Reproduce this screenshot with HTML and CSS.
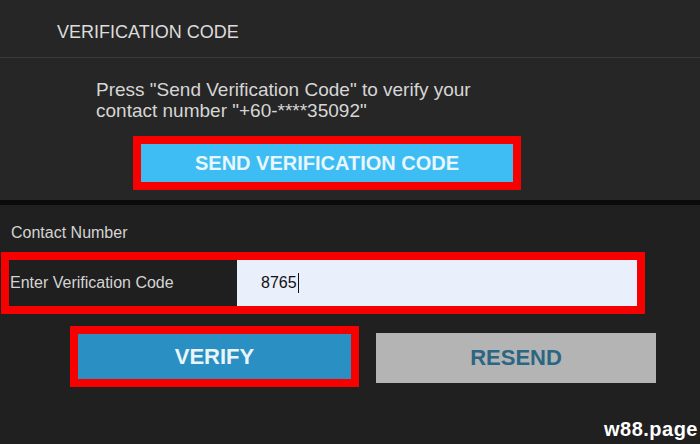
FILE: index.html
```html
<!DOCTYPE html>
<html lang="en">
<head>
  <meta charset="UTF-8" />
  <meta name="viewport" content="width=device-width, initial-scale=1.0"/>
  <title>Verification Code</title>
  <link rel="stylesheet" href="styles.css">
</head>
<body>

  <!-- Send code panel -->
  <div class="send-panel">
    <div class="panel-title">VERIFICATION CODE</div>
    <p class="send-info">Press "Send Verification Code" to verify your contact number "+60-****35092"</p>
    <div class="highlight send-box">
      <button class="btn-send">SEND VERIFICATION CODE</button>
    </div>
  </div>

  <!-- Verify form -->
  <div class="verify-panel">
    <div class="field-label">Contact Number</div>

    <div class="highlight code-row">
      <div class="code-label">Enter Verification Code</div>
      <div class="code-field">8765<span class="caret"></span></div>
    </div>

    <div class="actions">
      <div class="highlight verify-box">
        <button class="btn-verify">VERIFY</button>
      </div>
      <button class="btn-resend">RESEND</button>
    </div>

    <div class="watermark">w88.page</div>
  </div>

</body>
</html>
```

FILE: styles.css
```css
body {
  margin: 0;
  font-family: "Liberation Sans", Arial, sans-serif;
  background: #202020;
  color: #d8d8d8;
}

.send-panel {
  height: 200px;
  background: #262626;
  border-bottom: 5px solid #0b0b0b;
}

.panel-title {
  height: 35px;
  padding: 22px 0 0 57px;
  font-size: 18px;
  line-height: 20px;
  color: #dcdcdc;
  border-bottom: 1px solid #3b3b3b;
}

.send-info {
  width: 400px;
  margin: 21px 0 0 96px;
  font-size: 19px;
  line-height: 21px;
  color: #d6d6d6;
}

.highlight {
  border: 8px solid #f70000;
}

.send-box {
  width: 372px;
  margin: 15px 0 0 133px;
}

.send-box button,
.verify-box button {
  display: block;
  width: 100%;
  border: none;
  cursor: pointer;
  font-family: inherit;
  font-weight: bold;
}

.btn-send {
  height: 38px;
  background: #3dbdf4;
  color: #e9f6fc;
  font-size: 20px;
}

.verify-panel {
  position: relative;
  height: 239px;
  padding-top: 19px;
  background: #202020;
}

.field-label {
  padding-left: 11px;
  font-size: 16px;
  line-height: 18px;
  color: #d4d4d4;
}

.code-row {
  display: flex;
  width: 628px;
  height: 46px;
  margin: 10px 0 0 1px;
  background: #1f1f1f;
}

.code-label {
  width: 227px;
  padding-left: 1px;
  display: flex;
  align-items: center;
  font-size: 16px;
  color: #d4d4d4;
}

.code-field {
  flex: 1;
  display: flex;
  align-items: center;
  padding-left: 24px;
  background: #e9effb;
  color: #111;
  font-size: 16px;
}

.caret {
  display: inline-block;
  width: 1px;
  height: 20px;
  margin-left: 1px;
  background: #111;
}

.actions {
  display: flex;
  align-items: center;
  gap: 17px;
  margin: 12px 0 0 70px;
}

.verify-box {
  width: 273px;
}

.btn-verify {
  height: 45px;
  background: #2a8fc2;
  color: #eaf5fa;
  font-size: 22px;
}

.btn-resend {
  width: 280px;
  height: 50px;
  margin-top: 2px;
  border: none;
  background: #b4b4b4;
  color: #2b6683;
  font-family: inherit;
  font-size: 22px;
  font-weight: bold;
  cursor: pointer;
}

.watermark {
  position: absolute;
  top: 213px;
  right: 2px;
  font-size: 20px;
  font-weight: bold;
  letter-spacing: 0.5px;
  color: #fff;
}
```
